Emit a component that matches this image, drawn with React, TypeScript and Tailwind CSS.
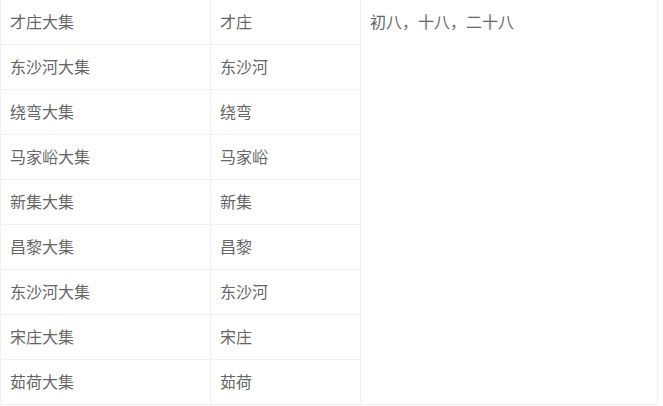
import React from 'react';

const rows: [string, string][] = [
  ['才庄大集', '才庄'],
  ['东沙河大集', '东沙河'],
  ['绕弯大集', '绕弯'],
  ['马家峪大集', '马家峪'],
  ['新集大集', '新集'],
  ['昌黎大集', '昌黎'],
  ['东沙河大集', '东沙河'],
  ['宋庄大集', '宋庄'],
  ['茹荷大集', '茹荷'],
];

export default function App(): React.ReactElement {
  return (
    <div className="w-[663px] h-[406px] overflow-hidden bg-white font-['Noto_Sans_CJK_SC',sans-serif] text-[16px] text-[#666]">
      <table className="-mt-[1px] w-[658px] border-collapse table-fixed">
        <colgroup>
          <col className="w-[210px]" />
          <col className="w-[150px]" />
          <col />
        </colgroup>
        <tbody>
          {rows.map(([market, place], i) => (
            <tr key={i} className="h-[45px]">
              <td className="border border-[#f0f0f0] pl-[9px] pb-[2px] align-middle leading-none">{market}</td>
              <td className="border border-[#f0f0f0] pl-[9px] pb-[2px] align-middle leading-none">{place}</td>
              {i === 0 && (
                <td rowSpan={rows.length} className="border border-[#f0f0f0] pl-[9px] pt-[13px] align-top leading-none">
                  初八，十八，二十八
                </td>
              )}
            </tr>
          ))}
        </tbody>
      </table>
    </div>
  );
}
